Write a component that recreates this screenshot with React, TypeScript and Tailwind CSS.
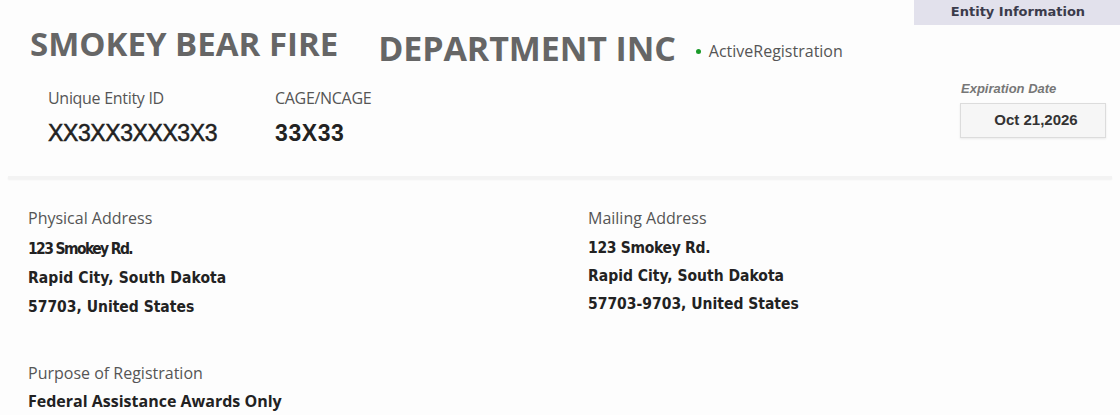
export default function App() {
  return (
    <div className="relative h-[415px] w-[1120px] overflow-hidden bg-[#fdfdfd] font-['Open_Sans',sans-serif] text-[#222]">
      <div className="absolute right-0 top-0 flex h-[25px] w-[206px] items-center justify-center bg-[#e2e1ec] pb-[2px] pl-[2px] font-['DejaVu_Sans',sans-serif] text-[13px] font-bold text-[#3b3b4b]">
        Entity Information
      </div>

      <div className="flex items-start justify-between pl-[30px] pr-[14px] pt-[24px]">
        <div>
          <div className="flex items-end">
            <h1 className="text-[33px] font-bold leading-[40px] text-[#666]">SMOKEY BEAR FIRE</h1>
            <span className="ml-[40px] translate-y-[4px] text-[34px] font-bold leading-[40px] tracking-[-0.1px] text-[#666]">DEPARTMENT INC</span>
            <span className="mb-[1px] ml-[20px] flex items-center text-[16px] text-[#555]">
              <span className="mr-[8px] h-[5px] w-[5px] rounded-full bg-[#1a9a2a]" />
              ActiveRegistration
            </span>
          </div>
          <div className="mt-[23px] flex pl-[18px]">
            <div className="w-[227px]">
              <div className="text-[16px] leading-[22px] tracking-[-0.3px] text-[#555]">Unique Entity ID</div>
              <div className="mt-[11px] font-['Liberation_Sans',sans-serif] text-[23px] leading-[26px] tracking-[-0.4px] text-[#222] [-webkit-text-stroke:0.5px_#222]">XX3XX3XXX3X3</div>
            </div>
            <div>
              <div className="text-[16px] leading-[22px] tracking-[-0.3px] text-[#555]">CAGE/NCAGE</div>
              <div className="mt-[11px] font-['Liberation_Sans',sans-serif] text-[23px] font-bold leading-[26px] tracking-[0.6px] text-[#222]">33X33</div>
            </div>
          </div>
        </div>
        <div className="mt-[55px] flex flex-col">
          <div className="pl-[1px] font-['Liberation_Sans',sans-serif] text-[13px] font-bold italic text-[#777]">Expiration Date</div>
          <div className="mt-[4px] flex h-[35px] w-[146px] items-center justify-center border border-[#dcdcdc] bg-[#f6f6f6] pl-[6px] font-['Liberation_Sans',sans-serif] text-[15px] font-bold text-[#333] shadow-[0_1px_2px_rgba(0,0,0,0.08)]">
            Oct 21,2026
          </div>
        </div>
      </div>

      <div className="mx-[8px] mt-[30px] h-[3px] bg-[#f3f3f3] shadow-[0_1px_2px_rgba(0,0,0,0.05)]" />

      <div className="mt-[28px] grid grid-cols-[560px_1fr] pl-[28px]">
        <div>
          <div className="text-[16px] leading-[22px] text-[#555]">Physical Address</div>
          <div className="mt-[6px] font-['DejaVu_Sans_Condensed',sans-serif] text-[15.5px] font-bold leading-[29px] text-[#222]">
            <div className="tracking-[-1.6px]">123 Smokey Rd.</div>
            <div className="tracking-[0.1px]">Rapid City, South Dakota</div>
            <div>57703, United States</div>
          </div>
        </div>
        <div>
          <div className="text-[16px] leading-[22px] text-[#555]">Mailing Address</div>
          <div className="mt-[5px] font-['DejaVu_Sans_Condensed',sans-serif] text-[15.5px] font-bold leading-[28px] text-[#222]">
            <div className="tracking-[-0.3px]">123 Smokey Rd.</div>
            <div>Rapid City, South Dakota</div>
            <div>57703-9703, United States</div>
          </div>
        </div>
      </div>

      <div className="mt-[40px] pl-[28px]">
        <div className="text-[16px] leading-[22px] text-[#555]">Purpose of Registration</div>
        <div className="mt-[6px] text-[16px] font-bold leading-[22px] text-[#222]">Federal Assistance Awards Only</div>
      </div>
    </div>
  )
}
